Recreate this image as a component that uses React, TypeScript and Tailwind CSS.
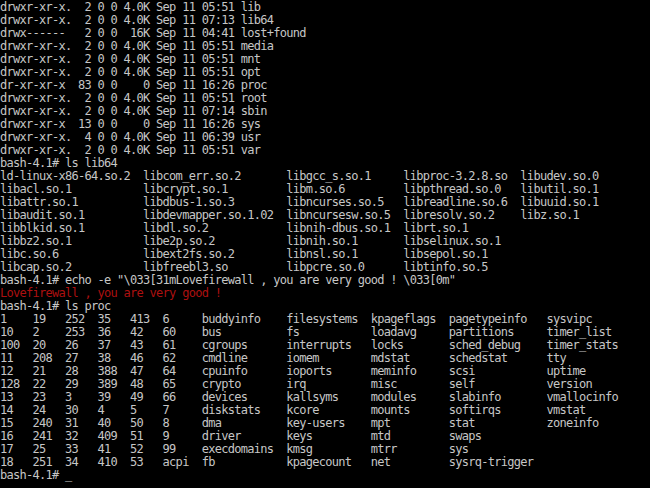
const lsLong = [
  "drwxr-xr-x.  2 0 0 4.0K Sep 11 05:51 lib",
  "drwxr-xr-x.  2 0 0 4.0K Sep 11 07:13 lib64",
  "drwx------   2 0 0  16K Sep 11 04:41 lost+found",
  "drwxr-xr-x.  2 0 0 4.0K Sep 11 05:51 media",
  "drwxr-xr-x.  2 0 0 4.0K Sep 11 05:51 mnt",
  "drwxr-xr-x.  2 0 0 4.0K Sep 11 05:51 opt",
  "dr-xr-xr-x  83 0 0    0 Sep 11 16:26 proc",
  "drwxr-xr-x.  2 0 0 4.0K Sep 11 05:51 root",
  "drwxr-xr-x.  2 0 0 4.0K Sep 11 07:14 sbin",
  "drwxr-xr-x  13 0 0    0 Sep 11 16:26 sys",
  "drwxr-xr-x.  4 0 0 4.0K Sep 11 06:39 usr",
  "drwxr-xr-x.  2 0 0 4.0K Sep 11 05:51 var",
]

const lib64 = [
  ["ld-linux-x86-64.so.2", "libcom_err.so.2", "libgcc_s.so.1", "libproc-3.2.8.so", "libudev.so.0"],
  ["libacl.so.1", "libcrypt.so.1", "libm.so.6", "libpthread.so.0", "libutil.so.1"],
  ["libattr.so.1", "libdbus-1.so.3", "libncurses.so.5", "libreadline.so.6", "libuuid.so.1"],
  ["libaudit.so.1", "libdevmapper.so.1.02", "libncursesw.so.5", "libresolv.so.2", "libz.so.1"],
  ["libblkid.so.1", "libdl.so.2", "libnih-dbus.so.1", "librt.so.1"],
  ["libbz2.so.1", "libe2p.so.2", "libnih.so.1", "libselinux.so.1"],
  ["libc.so.6", "libext2fs.so.2", "libnsl.so.1", "libsepol.so.1"],
  ["libcap.so.2", "libfreebl3.so", "libpcre.so.0", "libtinfo.so.5"],
]

const proc = [
  ["1", "19", "252", "35", "413", "6", "buddyinfo", "filesystems", "kpageflags", "pagetypeinfo", "sysvipc"],
  ["10", "2", "253", "36", "42", "60", "bus", "fs", "loadavg", "partitions", "timer_list"],
  ["100", "20", "26", "37", "43", "61", "cgroups", "interrupts", "locks", "sched_debug", "timer_stats"],
  ["11", "208", "27", "38", "46", "62", "cmdline", "iomem", "mdstat", "schedstat", "tty"],
  ["12", "21", "28", "388", "47", "64", "cpuinfo", "ioports", "meminfo", "scsi", "uptime"],
  ["128", "22", "29", "389", "48", "65", "crypto", "irq", "misc", "self", "version"],
  ["13", "23", "3", "39", "49", "66", "devices", "kallsyms", "modules", "slabinfo", "vmallocinfo"],
  ["14", "24", "30", "4", "5", "7", "diskstats", "kcore", "mounts", "softirqs", "vmstat"],
  ["15", "240", "31", "40", "50", "8", "dma", "key-users", "mpt", "stat", "zoneinfo"],
  ["16", "241", "32", "409", "51", "9", "driver", "keys", "mtd", "swaps"],
  ["17", "25", "33", "41", "52", "99", "execdomains", "kmsg", "mtrr", "sys"],
  ["18", "251", "34", "410", "53", "acpi", "fb", "kpagecount", "net", "sysrq-trigger"],
]

// column widths in characters, like ls pads them
const pad = (cells: string[], widths: number[]) =>
  cells.map((c, i) => (i < cells.length - 1 ? c.padEnd(widths[i]) : c)).join("")

const Line = (props: { text: string; red?: boolean }) => {
  return (
    <div className={"h-[13px] leading-[13px] whitespace-pre " + (props.red ? "text-[#ad1010]" : "")}>
      {props.text}
    </div>
  )
}

const App = () => {
  const lines: { text: string; red?: boolean }[] = [
    ...lsLong.map((t) => ({ text: t })),
    { text: "bash-4.1# ls lib64" },
    ...lib64.map((r) => ({ text: pad(r, [22, 22, 18, 18]) })),
    { text: 'bash-4.1# echo -e "\\033[31mLovefirewall , you are very good ! \\033[0m"' },
    { text: "Lovefirewall , you are very good !", red: true },
    { text: "bash-4.1# ls proc" },
    ...proc.map((r) => ({ text: pad(r, [5, 5, 5, 5, 5, 6, 13, 13, 12, 15]) })),
    { text: "bash-4.1# _" },
  ]

  return (
    <div className="w-[650px] h-[488px] bg-black overflow-hidden pt-[1px] text-[#c6c6c6] font-['DejaVu_Sans_Mono',monospace] text-[12px] tracking-[-0.72px]">
      {lines.map((l, i) => (
        <Line key={i} text={l.text} red={l.red} />
      ))}
    </div>
  )
}

export default App
